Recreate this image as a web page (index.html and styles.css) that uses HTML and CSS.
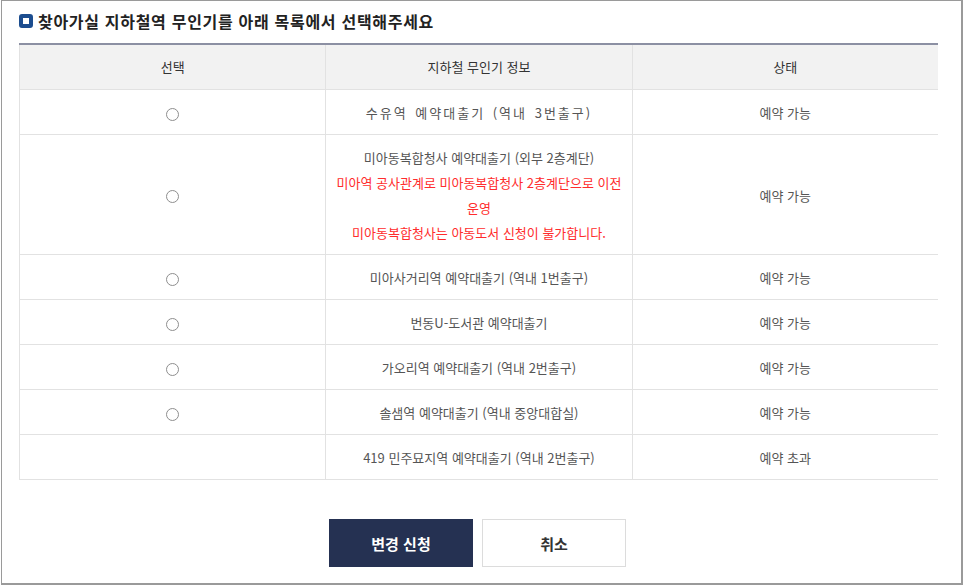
FILE: index.html
```html
<!DOCTYPE html>
<html lang="ko">
<head>
<meta charset="utf-8">
<link rel="stylesheet" href="styles.css">
</head>
<body>
<div class="frame">
  <h2 class="title"><span class="title-icon"></span>찾아가실 지하철역 무인기를 아래 목록에서 선택해주세요</h2>
  <table class="list">
    <thead>
      <tr><th>선택</th><th>지하철 무인기 정보</th><th>상태</th></tr>
    </thead>
    <tbody>
      <tr><td><input type="radio" name="st" class="radio"></td><td class="wide">수유역 예약대출기 (역내 3번출구)</td><td>예약 가능</td></tr>
      <tr class="tall"><td><input type="radio" name="st" class="radio"></td><td>미아동복합청사 예약대출기 (외부 2층계단)<br><span class="red">미아역 공사관계로 미아동복합청사 2층계단으로 이전<br>운영<br>미아동복합청사는 아동도서 신청이 불가합니다.</span></td><td>예약 가능</td></tr>
      <tr><td><input type="radio" name="st" class="radio"></td><td>미아사거리역 예약대출기 (역내 1번출구)</td><td>예약 가능</td></tr>
      <tr><td><input type="radio" name="st" class="radio"></td><td>번동U-도서관 예약대출기</td><td>예약 가능</td></tr>
      <tr><td><input type="radio" name="st" class="radio"></td><td>가오리역 예약대출기 (역내 2번출구)</td><td>예약 가능</td></tr>
      <tr><td><input type="radio" name="st" class="radio"></td><td>솔샘역 예약대출기 (역내 중앙대합실)</td><td>예약 가능</td></tr>
      <tr><td></td><td>419 민주묘지역 예약대출기 (역내 2번출구)</td><td>예약 초과</td></tr>
    </tbody>
  </table>
  <div class="actions">
    <button class="btn btn-primary">변경 신청</button>
    <button class="btn btn-cancel">취소</button>
  </div>
</div>
</body>
</html>
```

FILE: styles.css
```css
html, body {
  margin: 0;
  padding: 0;
  background: #fff;
}
body {
  font-family: "Noto Sans CJK KR", "Noto Sans", sans-serif;
  color: #555;
}
.frame {
  box-sizing: border-box;
  width: 962px;
  height: 585px;
  margin-left: 1px;
  border: 1px solid #9a9a9a;
  border-right-width: 2px;
  border-bottom-width: 2px;
  padding: 0 0 0 17px;
}
.title {
  display: flex;
  align-items: center;
  margin: 0;
  padding-top: 9px;
  height: 22px;
  font-size: 16px;
  font-weight: 700;
  color: #222;
  letter-spacing: 0.7px;
  margin-bottom: 11px;
}
.title-icon {
  box-sizing: border-box;
  width: 14px;
  height: 14px;
  border-radius: 3px;
  border: 4px solid #1c4d8f;
  background: #fff;
  margin-right: 5px;
  flex: none;
}
.list {
  width: 919px;
  border-collapse: collapse;
  table-layout: fixed;
  border-top: 2px solid #8c90a3;
  font-size: 13px;
}
.list th, .list td {
  width: 33.33%;
  text-align: center;
  vertical-align: middle;
  border: 1px solid #e2e2e2;
  border-top: none;
  line-height: 25px;
  padding: 10px 8px 9px;
}
.list th:last-child, .list td:last-child {
  border-right: none;
}
.list th {
  background: #f2f2f2;
  font-weight: 400;
  color: #333;
  padding: 9px 8px 10px;
}
.list td.wide {
  letter-spacing: 2px;
  word-spacing: 2px;
}
.red {
  color: #ff2c2c;
}
.radio {
  appearance: none;
  -webkit-appearance: none;
  box-sizing: border-box;
  width: 13px;
  height: 13px;
  margin: 0;
  border: 1px solid #8e8e8e;
  border-radius: 50%;
  background: #fff;
  vertical-align: middle;
}
.actions {
  display: flex;
  justify-content: center;
  gap: 9px;
  width: 917px;
  margin-top: 39px;
}
.btn {
  box-sizing: border-box;
  width: 144px;
  height: 48px;
  font-family: inherit;
  font-size: 15px;
  font-weight: 700;
  cursor: pointer;
}
.btn-primary {
  background: #253152;
  color: #fff;
  border: 1px solid #253152;
}
.btn-cancel {
  background: #fff;
  color: #333;
  border: 1px solid #dcdcdc;
}
```
